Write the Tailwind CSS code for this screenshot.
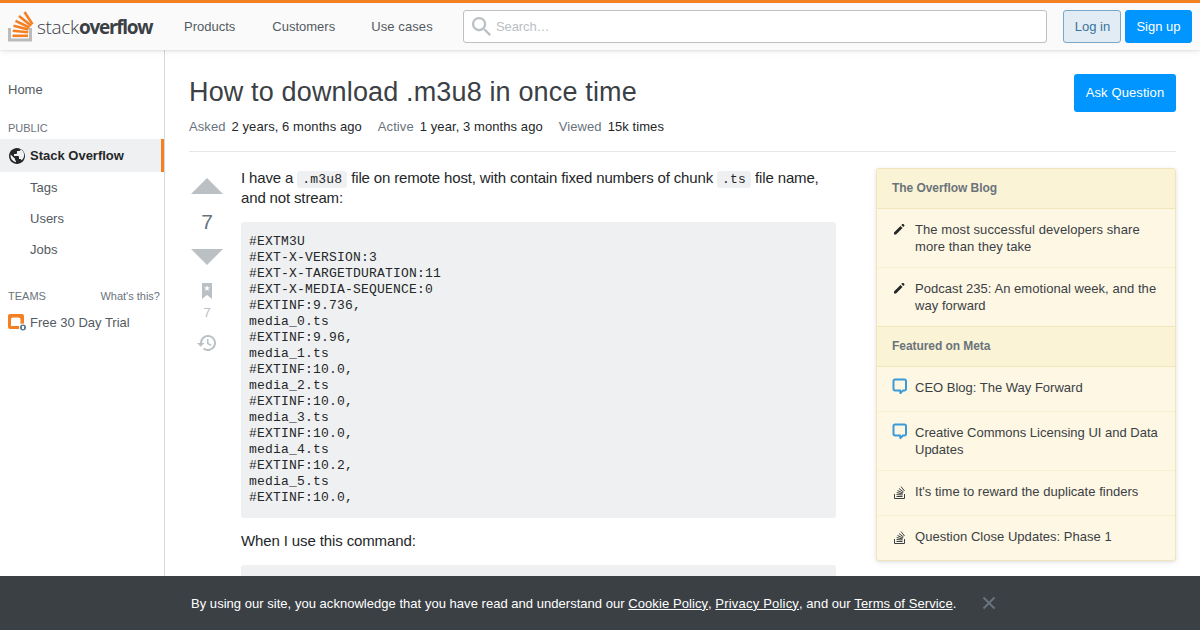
<!DOCTYPE html>
<html lang="en">
<head>
<meta charset="utf-8">
<title>How to download .m3u8 in once time</title>
<script src="https://cdn.jsdelivr.net/npm/@tailwindcss/browser@4"></script>
</head>
<body class="relative h-[630px] w-[1200px] overflow-hidden bg-white font-['Liberation_Sans',Arial,sans-serif] text-[13px] text-[#242729]">
<header class="relative z-10 flex h-[50px] items-center border-t-[3px] border-[#f48024] bg-[#fafafb] shadow-[0_1px_2px_rgba(12,13,14,0.05),0_1px_4px_rgba(12,13,14,0.05),0_2px_8px_rgba(12,13,14,0.05)]">
  <a class="flex w-[166px] shrink-0 items-center pl-2">
    <svg width="26" height="32" viewBox="0 0 26 32" class="shrink-0 translate-y-[-1px]">
      <path d="M1.500 18v12h21V18" fill="none" stroke="#bcbbbb" stroke-width="3"/>
      <g fill="none" stroke="#f48024" stroke-width="2.600">
        <path d="M4.500 25.800h15.500"/>
        <path d="M4.700 20.800l15.500 1.500"/>
        <path d="M5.500 15.800l15 3.700"/>
        <path d="M7.500 10.800l14 6.700"/>
        <path d="M11 6l12.200 9.800"/>
        <path d="M16.500 2l8 12.300"/>
      </g>
    </svg>
    <span class="ml-[3px] translate-y-[1px] whitespace-nowrap font-['Open_Sans',sans-serif] text-[19px] leading-none text-[#3b4045]"><span class="font-light tracking-[-0.3px]">stack</span><span class="font-bold tracking-[-1.3px]">overflow</span></span>
  </a>
  <nav class="flex w-[297px] shrink-0 items-center text-[#535a60]">
    <a class="ml-[18px]">Products</a>
    <a class="ml-[37px]">Customers</a>
    <a class="ml-[36px] tracking-[0.1px]">Use cases</a>
  </nav>
  <div class="flex h-[33px] w-[584px] shrink-0 items-center rounded-[3px] border border-[#bbc0c4] bg-white pl-[8px]">
    <svg width="19" height="19" viewBox="0 0 18 18" class="shrink-0"><path d="M12.860 11.320L18 16.460 16.460 18l-5.140-5.140v-.81l-.28-.29A6.690 6.690 0 1 1 6.690 0a6.690 6.690 0 0 1 5.080 11.040l.29.28h.8zM6.690 11.320a4.630 4.630 0 1 0 0-9.260 4.630 4.630 0 0 0 0 9.260z" fill="#bbc0c4"/></svg>
    <span class="ml-[5px] tracking-[-0.1px] text-[#bbc0c4]">Search…</span>
  </div>
  <a class="ml-4 flex h-[33px] w-[58px] shrink-0 items-center justify-center rounded-[3px] border border-[#7aa7c7] bg-[#e1ecf4] pl-[1px] text-[#39739d]">Log in</a>
  <a class="ml-1 flex h-[33px] w-[67px] shrink-0 items-center justify-center rounded-[3px] border border-[#0095ff] bg-[#0095ff] text-white">Sign up</a>
</header>

<div class="flex">
  <aside class="h-[580px] w-[165px] shrink-0 border-r border-[#d6d9dc] pt-[25px] text-[#535a60]">
    <div class="flex h-[30px] items-center pl-2">Home</div>
    <div class="mt-[16px] flex h-[14px] items-center pl-2 text-[11px] text-[#6a737c]">PUBLIC</div>
    <div class="mt-[4px] flex h-[33px] items-center border-r-[3px] border-[#f48024] bg-[#eff0f1] pl-2 font-bold text-[#242729]">
      <svg width="18" height="18" viewBox="0 0 18 18" class="mr-1 shrink-0"><path d="M9 1C4.640 1 1 4.640 1 9c0 4.360 3.640 8 8 8 4.360 0 8-3.640 8-8 0-4.360-3.640-8-8-8zM8 15.320a6.460 6.460 0 0 1-5.300-7.750L7 11.800v.8c0 .8.800 1.400 1 1.400v1.320zm5.500-2.100c-.2-.7-.8-1.220-1.500-1.220h-1v-2c0-.5-.5-1-1-1H6V7h2c.5 0 1-.5 1-1V4h2c.8 0 1.500-.7 1.500-1.500v-.3a6.470 6.470 0 0 1 1 11.020z" fill="#242729"/></svg>
      <span>Stack Overflow</span>
    </div>
    <div class="flex h-[31px] items-center pl-[30px]">Tags</div>
    <div class="flex h-[31px] items-center pl-[30px]">Users</div>
    <div class="flex h-[31px] items-center pl-[30px]">Jobs</div>
    <div class="mt-[24px] flex h-[14px] items-center justify-between pl-2 pr-1 text-[11px] text-[#6a737c]"><span>TEAMS</span><span>What's this?</span></div>
    <div class="mt-[11px] flex h-[18px] items-center pl-2">
      <svg width="18" height="18" viewBox="0 0 18 18" class="mr-1 shrink-0"><rect x="0" y="0" width="16" height="15" rx="2" fill="#f48024"/><path d="M3 5.500a2 2 0 0 1 2-2h5.500a2 2 0 0 1 2 2V12H3z" fill="#fff"/><circle cx="15" cy="13.500" r="4" fill="#fff"/><circle cx="15" cy="13.500" r="3" fill="#5c7a91"/><rect x="14" y="12" width="2" height="3" fill="#fff"/></svg>
      <span>Free 30 Day Trial</span>
    </div>
  </aside>

  <main class="w-[1011px] shrink-0 pl-[24px]">
    <div class="flex h-[102px] w-[987px] flex-col border-b border-[#e4e6e8]">
      <div class="flex h-[62px] items-start justify-between pt-[24px]">
        <h1 class="mt-[1px] text-[27px] leading-[35px] font-normal tracking-[0.15px] text-[#3b4045]">How to download .m3u8 in once time</h1>
        <a class="flex h-[38px] w-[102px] items-center justify-center rounded-[3px] bg-[#0095ff] tracking-[0.1px] text-white">Ask Question</a>
      </div>
      <div class="mt-[5px] flex tracking-[0.08px] text-[#242729]">
        <span class="text-[#6a737c]">Asked</span><span class="ml-[6px]">2 years, 6 months ago</span>
        <span class="ml-[16px] text-[#6a737c]">Active</span><span class="ml-[6px]">1 year, 3 months ago</span>
        <span class="ml-[16px] text-[#6a737c]">Viewed</span><span class="ml-[6px]">15k times</span>
      </div>
    </div>

    <div class="flex pt-[16px]">
      <div class="flex w-[36px] shrink-0 flex-col items-center text-[#bbc0c4]">
        <svg width="32" height="16" viewBox="0 0 32 16" class="mt-[10px]"><path d="M0 16L16 0l16 16z" fill="#bbc0c4"/></svg>
        <div class="mt-[16px] text-[21px] leading-[24px] text-[#6a737c]">7</div>
        <svg width="32" height="16" viewBox="0 0 32 16" class="mt-[15px]"><path d="M0 0l16 16L32 0z" fill="#bbc0c4"/></svg>
        <svg width="10" height="16" viewBox="0 0 10 16" class="mt-[18px]"><path d="M0 0h10v16l-5-4-5 4z" fill="#bbc0c4"/><path d="M5 2.500l.8 1.800 1.900.2-1.400 1.300.4 1.900L5 6.800l-1.700.9.400-1.900L2.300 4.500l1.900-.2z" fill="#fff"/></svg>
        <div class="mt-[5px] text-[13px] leading-[17px] text-[#bbc0c4]">7</div>
        <svg width="20" height="18" viewBox="0 0 20 18" class="mt-[13px]"><path d="M11 1a8 8 0 0 0-8 8H0l3.700 3.800L7.500 9H5a6 6 0 1 1 2.300 4.700l-1.400 1.500A8 8 0 1 0 11 1z" fill="#bbc0c4"/><path d="M10 5h1.500v4l3 1.800-.7 1.200L10 10z" fill="#bbc0c4"/></svg>
      </div>

      <div class="ml-[16px] w-[595px] shrink-0 text-[15px] leading-[20px] text-[#242729]">
        <p class="h-[40px] tracking-[-0.15px]">I have a <code class="rounded-[3px] bg-[#eff0f1] px-[5px] py-[1px] font-['Liberation_Mono',monospace] text-[13px] leading-none tracking-[0.2px]">.m3u8</code> file on remote host, with contain fixed numbers of chunk <code class="rounded-[3px] bg-[#eff0f1] px-[5px] py-[1px] font-['Liberation_Mono',monospace] text-[13px] leading-none tracking-[0.2px]">.ts</code> file name, and not stream:</p>
        <pre class="mt-[14px] h-[296px] overflow-hidden rounded-[3px] bg-[#eff0f1] p-2 pt-[12px] font-['Liberation_Mono',monospace] text-[13px] leading-[16px] tracking-[0.2px] text-[#242729]">#EXTM3U
#EXT-X-VERSION:3
#EXT-X-TARGETDURATION:11
#EXT-X-MEDIA-SEQUENCE:0
#EXTINF:9.736,
media_0.ts
#EXTINF:9.96,
media_1.ts
#EXTINF:10.0,
media_2.ts
#EXTINF:10.0,
media_3.ts
#EXTINF:10.0,
media_4.ts
#EXTINF:10.2,
media_5.ts
#EXTINF:10.0,</pre>
        <p class="mt-[13px] tracking-[-0.12px]">When I use this command:</p>
        <div class="mt-[14px] h-[60px] rounded-[3px] bg-[#eff0f1]"></div>
      </div>

      <aside class="ml-[40px] w-[300px] shrink-0 self-start rounded-[3px] border border-[#f1e5bc] bg-[#fdf7e3] text-[#3b4045] shadow-[0_1px_2px_rgba(12,13,14,0.05),0_1px_4px_rgba(12,13,14,0.05),0_2px_8px_rgba(12,13,14,0.05)]">
        <div class="flex h-[40px] items-center border-b border-[#f1e5bc] bg-[#fbf3d5] pb-[1px] pl-[15px] text-[12px] font-bold tracking-[-0.06px] text-[#6a737c]">The Overflow Blog</div>
        <div class="flex h-[59px] border-b border-[#f8efd0] pl-[15px] pt-[12px] leading-[17px] tracking-[0.08px]">
          <svg width="14" height="14" viewBox="0 0 14 14" class="mt-[1px] shrink-0"><path d="M2 10.500L2 12.500l2-.1 6.500-6.500-2-2zM9.300 3.100l2 2 1-1c.3-.3.3-.8 0-1.100l-.9-.9c-.3-.3-.8-.3-1.100 0z" fill="#242729"/></svg>
          <span class="ml-[9px]">The most successful developers share<br>more than they take</span>
        </div>
        <div class="flex h-[59px] border-b border-[#f1e5bc] pl-[15px] pt-[12px] leading-[17px] tracking-[0.05px]">
          <svg width="14" height="14" viewBox="0 0 14 14" class="mt-[1px] shrink-0"><path d="M2 10.500L2 12.500l2-.1 6.500-6.500-2-2zM9.300 3.100l2 2 1-1c.3-.3.3-.8 0-1.100l-.9-.9c-.3-.3-.8-.3-1.100 0z" fill="#242729"/></svg>
          <span class="ml-[9px]">Podcast 235: An emotional week, and the<br>way forward</span>
        </div>
        <div class="flex h-[40px] items-center border-b border-[#f1e5bc] bg-[#fbf3d5] pb-[1px] pl-[15px] text-[12px] font-bold tracking-[-0.06px] text-[#6a737c]">Featured on Meta</div>
        <div class="flex h-[45px] border-b border-[#f8efd0] pl-[15px] pt-[12px] leading-[17px]">
          <svg width="16" height="16" viewBox="0 0 16 16" class="-mt-[1px] shrink-0"><path d="M3 1.500h9.500A1.500 1.500 0 0 1 14 3v8a1.500 1.500 0 0 1-1.500 1.500H11L8.500 15 8 12.500H3A1.500 1.500 0 0 1 1.500 11V3A1.500 1.500 0 0 1 3 1.500z" fill="none" stroke="#3b9ad8" stroke-width="2"/></svg>
          <span class="ml-[7px]">CEO Blog: The Way Forward</span>
        </div>
        <div class="flex h-[59px] border-b border-[#f8efd0] pl-[15px] pt-[12px] leading-[17px]">
          <svg width="16" height="16" viewBox="0 0 16 16" class="-mt-[1px] shrink-0"><path d="M3 1.500h9.500A1.500 1.500 0 0 1 14 3v8a1.500 1.500 0 0 1-1.500 1.500H11L8.500 15 8 12.500H3A1.500 1.500 0 0 1 1.500 11V3A1.500 1.500 0 0 1 3 1.500z" fill="none" stroke="#3b9ad8" stroke-width="2"/></svg>
          <span class="ml-[7px]">Creative Commons Licensing UI and Data<br>Updates</span>
        </div>
        <div class="flex h-[45px] border-b border-[#f8efd0] pl-[15px] pt-[12px] leading-[17px] tracking-[0.03px]">
          <svg width="16" height="16" viewBox="0 0 16 16" class="mt-[1px] shrink-0"><path d="M2.500 10v4.500h10V10" fill="none" stroke="#3b4045"/><path d="M4.500 12.500h6M4.500 10.500l6 .5M4.700 8.500l6 1.500M5.500 6.500l5.500 2.500M7 4.500l4.500 3.500M9 2.500l3.500 4.500" stroke="#3b4045" fill="none"/></svg>
          <span class="ml-[7px]">It's time to reward the duplicate finders</span>
        </div>
        <div class="flex h-[44px] pl-[15px] pt-[12px] leading-[17px] tracking-[0.03px]">
          <svg width="16" height="16" viewBox="0 0 16 16" class="mt-[1px] shrink-0"><path d="M2.500 10v4.500h10V10" fill="none" stroke="#3b4045"/><path d="M4.500 12.500h6M4.500 10.500l6 .5M4.700 8.500l6 1.500M5.500 6.500l5.500 2.500M7 4.500l4.500 3.500M9 2.500l3.500 4.500" stroke="#3b4045" fill="none"/></svg>
          <span class="ml-[7px]">Question Close Updates: Phase 1</span>
        </div>
      </aside>
    </div>
  </main>
</div>

<div class="absolute bottom-0 left-0 z-20 flex h-[54px] w-full items-center bg-[#3b4045] pl-[191px] pt-[1px] text-[13px] tracking-[0.03px] text-white">
  <span>By using our site, you acknowledge that you have read and understand our <a class="tracking-[0.08px] underline">Cookie Policy</a>, <a class="tracking-[0.2px] underline">Privacy Policy</a>, and our <a class="tracking-[0.1px] underline">Terms of Service</a>.</span>
  <svg width="14" height="14" viewBox="0 0 14 14" class="ml-[26px] -translate-y-[1px]"><path d="M1.500 1.500l11 11M12.500 1.500l-11 11" stroke="#6a737c" stroke-width="2" fill="none"/></svg>
</div>
</body>
</html>
